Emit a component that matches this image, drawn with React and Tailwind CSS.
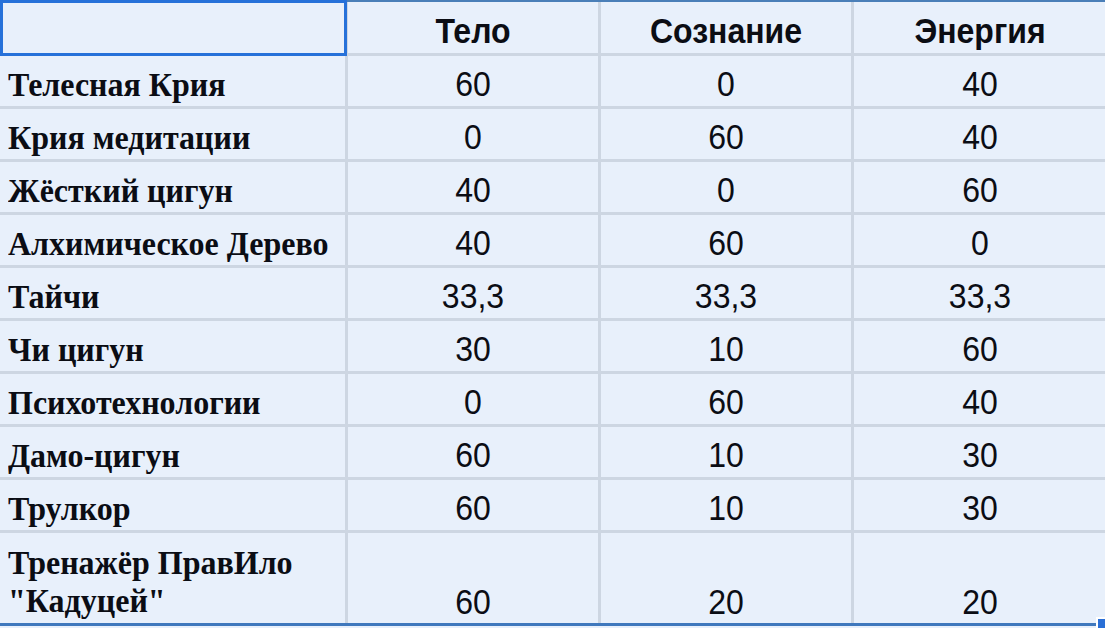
import React from "react";

const rows = [
  ["Телесная Крия", "60", "0", "40"],
  ["Крия медитации", "0", "60", "40"],
  ["Жёсткий цигун", "40", "0", "60"],
  ["Алхимическое Дерево", "40", "60", "0"],
  ["Тайчи", "33,3", "33,3", "33,3"],
  ["Чи цигун", "30", "10", "60"],
  ["Психотехнологии", "0", "60", "40"],
  ["Дамо-цигун", "60", "10", "30"],
  ["Трулкор", "60", "10", "30"],
];

const serif = { fontFamily: '"Liberation Serif", "Times New Roman", serif' };
const sans = { fontFamily: '"Liberation Sans", Arial, sans-serif' };

function T({ children }) {
  return <span className="inline-block origin-bottom scale-y-108">{children}</span>;
}

export default function App() {
  return (
    <div className="w-[1105px] h-[628px] bg-[#e8f0fb] overflow-hidden relative">
      <div className="relative grid grid-cols-[345px_250px_250px_252px] gap-[3px] bg-[#cdd6e2] border-t-2 border-[#4a7fb8] border-b-[3px] border-b-[#3f78bd]">
        {/* header */}
        <div className="h-[51px] bg-[#e8f0fb]" />
        {["Тело", "Сознание", "Энергия"].map((h) => (
          <div
            key={h}
            className="h-[51px] bg-[#e8f0fb] flex items-end justify-center pb-[5px] text-[32px] leading-[32px] font-bold text-[#0b0d14]"
            style={sans}
          >
            <T>{h}</T>
          </div>
        ))}
        {rows.map((r) => (
          <React.Fragment key={r[0]}>
            <div
              className="h-[50px] bg-[#e8f0fb] flex items-end pl-[8px] pb-[5px] text-[32px] leading-[32px] font-bold text-[#0b0d14] whitespace-nowrap"
              style={serif}
            >
              <T>{r[0]}</T>
            </div>
            {r.slice(1).map((v, i) => (
              <div
                key={i}
                className="h-[50px] bg-[#e8f0fb] flex items-end justify-center pb-[5px] text-[32px] leading-[32px] text-[#0b0d14]"
                style={sans}
              >
                <T>{v}</T>
              </div>
            ))}
          </React.Fragment>
        ))}
        <div
          className="h-[90px] bg-[#e8f0fb] flex items-end pl-[8px] pb-[3px] text-[32px] leading-[36px] font-bold text-[#0b0d14]"
          style={serif}
        >
          <span className="inline-block origin-bottom scale-y-108">
            Тренажёр ПравИло
            <br />
            "Кадуцей"
          </span>
        </div>
        {["60", "20", "20"].map((v, i) => (
          <div
            key={i}
            className="h-[90px] bg-[#e8f0fb] flex items-end justify-center pb-[4px] text-[32px] leading-[32px] text-[#0b0d14]"
            style={sans}
          >
            <T>{v}</T>
          </div>
        ))}
        <div className="absolute left-0 top-[-2px] w-[347px] h-[56px] border-[3px] border-[#2671d9]" />
      </div>
      <div className="absolute right-0 top-[617px] w-[9px] h-[11px] bg-[#2a6fd6] border-l-2 border-t-2 border-white" />
    </div>
  );
}
